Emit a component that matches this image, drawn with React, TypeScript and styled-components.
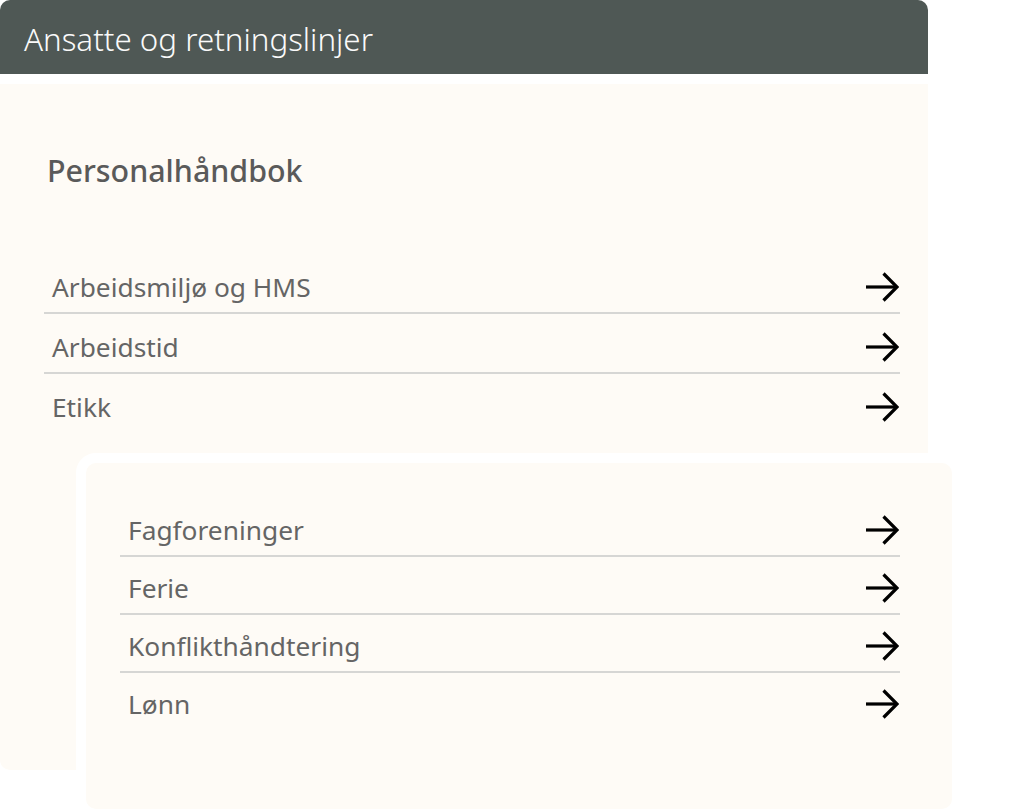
import React from 'react';
import styled, { createGlobalStyle } from 'styled-components';

const GlobalStyle = createGlobalStyle`
 html, body {
  margin: 0;
  padding: 0;
  background: #ffffff;
 }
 body {
  font-family: 'Noto Sans', 'Open Sans', sans-serif;
  overflow: hidden;
 }
`;

const Stage = styled.div`
 position: relative;
 width: 1030px;
 height: 810px;
`;

const Column = styled.div`
 display: flex;
 flex-direction: column;
 gap: 10px;
 width: 928px;
`;

const Header = styled.header`
 display: flex;
 align-items: center;
 height: 74px;
 padding: 4px 24px 0;
 box-sizing: border-box;
 background: #4f5855;
 border-radius: 10px 10px 0 0;
 color: #fafafa;
 font-size: 31.3px;
 font-weight: 300;
`;

const Panel = styled.section`
 height: 686px;
 box-sizing: border-box;
 padding: 69px 28px 0 44px;
 background: #fefbf6;
 border-radius: 0 0 0 10px;
`;

const Heading = styled.h2`
 margin: 0 0 65px 3px;
 font-size: 30.4px;
 line-height: 36px;
 font-weight: 500;
 color: #5a5a5a;
`;

const List = styled.ul`
 list-style: none;
 margin: 0;
 padding: 0;
`;

const Item = styled.li<{ $pitch: number; $top: number }>`
 display: flex;
 align-items: center;
 justify-content: space-between;
 height: ${(p) => p.$pitch}px;
 padding: ${(p) => p.$top}px 1px 0 8px;
 box-sizing: border-box;
 border-bottom: 2px solid #d6d6d4;
 color: #656565;
 font-size: 26.3px;
 &:last-child {
  border-bottom-color: transparent;
 }
`;

const OverlayCard = styled.div`
 position: absolute;
 left: 76px;
 top: 453px;
 width: 886px;
 height: 366px;
 padding: 36px 52px 0 34px;
 box-sizing: border-box;
 background: #fefbf6;
 border: 10px solid #ffffff;
 border-radius: 20px;
`;

const Arrow = () => (
 <svg width='34' height='32' viewBox='0 0 34 32' fill='none' stroke='#000' strokeWidth='3.2' strokeLinejoin='miter'>
  <path d='M1 16h30' />
  <path d='M18.5 2.5l13.5 13.5-13.5 13.5' />
 </svg>
);

const mainLinks = ['Arbeidsmiljø og HMS', 'Arbeidstid', 'Etikk'];
const extraLinks = ['Fagforeninger', 'Ferie', 'Konflikthåndtering', 'Lønn'];

export default function App() {
 return (
  <>
   <GlobalStyle />
   <Stage>
    <Column>
     <Header>Ansatte og retningslinjer</Header>
     <Panel>
      <Heading>Personalhåndbok</Heading>
      <List>
       {mainLinks.map((label) => (
        <Item key={label} $pitch={60} $top={8}>
         <span>{label}</span>
         <Arrow />
        </Item>
       ))}
      </List>
     </Panel>
    </Column>
    <OverlayCard>
     <List>
      {extraLinks.map((label) => (
       <Item key={label} $pitch={58} $top={5}>
        <span>{label}</span>
        <Arrow />
       </Item>
      ))}
     </List>
    </OverlayCard>
   </Stage>
  </>
 );
}
